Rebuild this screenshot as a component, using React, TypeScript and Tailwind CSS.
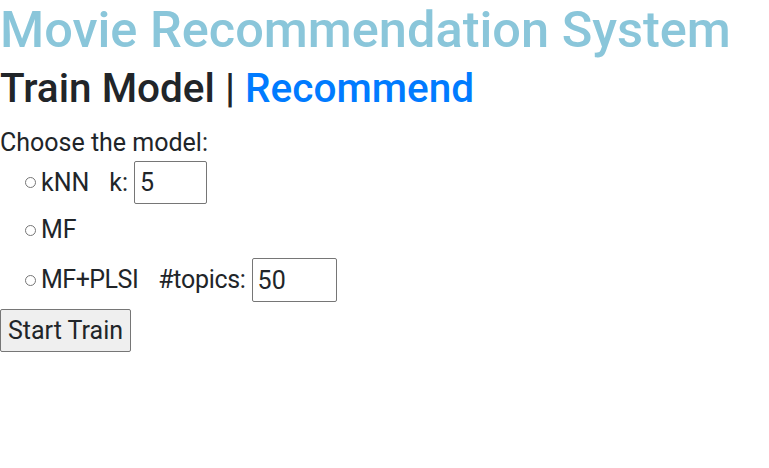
export default function App() {
  return (
    <div className="min-h-screen bg-white font-['Roboto',sans-serif] text-[#212529]">
      <h1 className="h-[52px] whitespace-nowrap text-[50.5px] leading-[60px] font-medium text-[#8ac6da]">
        Movie Recommendation System
      </h1>
      <h2 className="mt-[12px] h-[48px] whitespace-nowrap text-[40.5px] leading-[48px] font-medium">
        Train Model | <a className="text-[#007bff]" href="#">Recommend</a>
      </h2>
      <form className="mt-[14px] text-[25px]">
        <div className="h-[34px] leading-[34px]">Choose the model:</div>
        <div className="flex flex-col pl-[25px]">
          <label className="mt-[1px] flex h-[43px] items-center">
            <input className="mr-[5px] h-[11px] w-[11px] appearance-none rounded-full border border-[#767676]" type="radio" name="model" />
            kNN
            <span className="ml-[20px] mr-[6px]">k:</span>
            <input className="h-[43px] w-[73px] rounded-[2px] border border-[#767676] px-[5px] text-[25px]" defaultValue="5" />
          </label>
          <label className="mt-[8px] flex h-[36px] items-center">
            <input className="mr-[5px] h-[11px] w-[11px] appearance-none rounded-full border border-[#767676]" type="radio" name="model" />
            MF
          </label>
          <label className="mt-[10px] flex h-[44px] items-center">
            <input className="mr-[5px] h-[11px] w-[11px] appearance-none rounded-full border border-[#767676]" type="radio" name="model" />
            <span className="tracking-[-0.5px]">MF+PLSI</span>
            <span className="ml-[20px] mr-[6px] tracking-[-0.3px]">#topics:</span>
            <input className="h-[44px] w-[85px] rounded-[2px] border border-[#767676] px-[5px] text-[25px]" defaultValue="50" />
          </label>
        </div>
        <button className="mt-[7px] h-[43px] rounded-[2px] border border-[#767676] bg-[#efefef] px-[7px] text-[25px]" type="button">
          Start Train
        </button>
      </form>
    </div>
  );
}
